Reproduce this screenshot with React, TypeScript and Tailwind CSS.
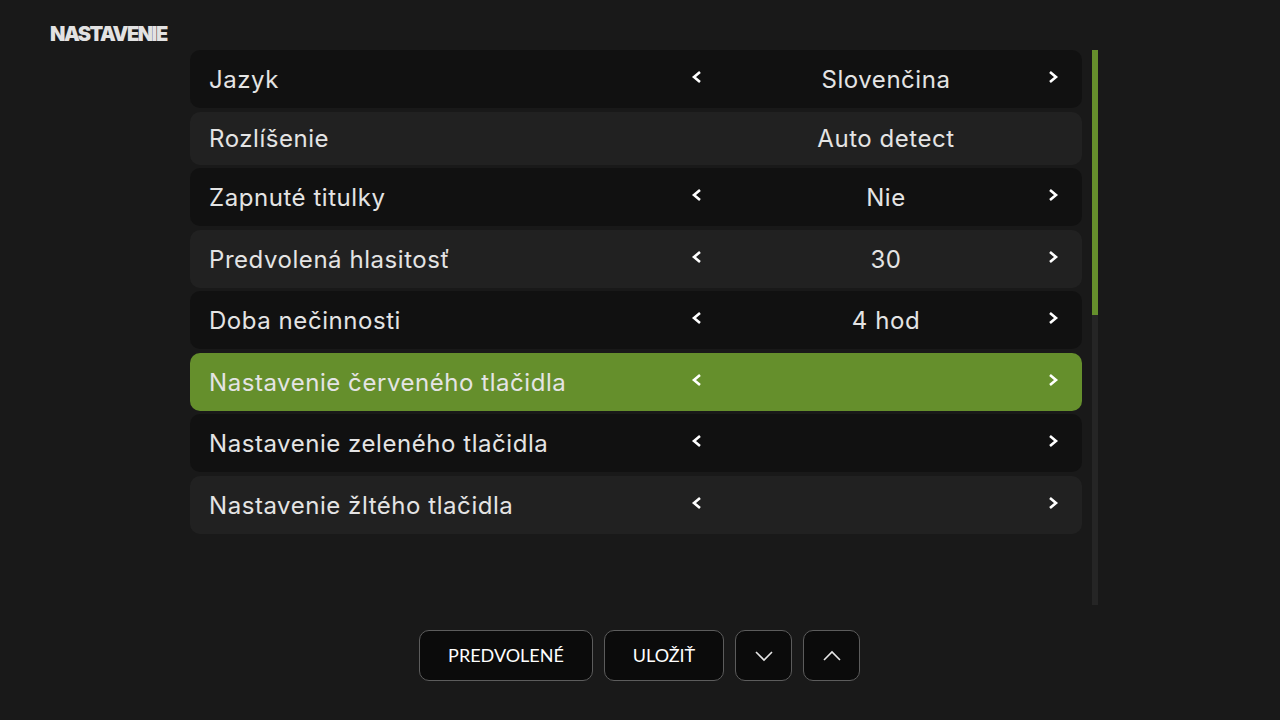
import React from "react";

type Row = { label: string; value: string; arrows: boolean };

const rows: Row[] = [
  { label: "Jazyk", value: "Slovenčina", arrows: true },
  { label: "Rozlíšenie", value: "Auto detect", arrows: false },
  { label: "Zapnuté titulky", value: "Nie", arrows: true },
  { label: "Predvolená hlasitosť", value: "30", arrows: true },
  { label: "Doba nečinnosti", value: "4 hod", arrows: true },
  { label: "Nastavenie červeného tlačidla", value: "", arrows: true },
  { label: "Nastavenie zeleného tlačidla", value: "", arrows: true },
  { label: "Nastavenie žltého tlačidla", value: "", arrows: true },
];

const Arrow = ({ dir }: { dir: "left" | "right" }) => (
  <svg width="12" height="14" viewBox="0 0 12 14" className="mb-[4px]">
    <polyline
      points={dir === "left" ? "9,2 3,7 9,12" : "3,2 9,7 3,12"}
      fill="none"
      stroke="#ffffff"
      strokeWidth="2.6"
      strokeLinejoin="miter"
    />
  </svg>
);

const Chevron = ({ up }: { up?: boolean }) => (
  <svg width="20" height="12" viewBox="0 0 20 12">
    <polyline
      points={up ? "2,10 10,2 18,10" : "2,2 10,10 18,2"}
      fill="none"
      stroke="#e6e6e6"
      strokeWidth="1.6"
    />
  </svg>
);

const SettingRow = ({ row, i }: { row: Row; i: number }) => {
  const active = i === 5;
  const bg = active ? "bg-[#658f2c]" : i % 2 === 0 ? "bg-[#111111]" : "bg-[#212121]";
  return (
    <div
      className={`flex items-center rounded-[10px] pl-[19px] pr-[22px] font-['Inter',sans-serif] ${bg} ${
        row.arrows ? "h-[58px]" : "h-[53px]"
      }`}
    >
      <div className="flex-1 pt-[2px] text-[24px] tracking-[0.55px] text-[#e4e4e4]">{row.label}</div>
      <div className="flex items-center w-[380px]">
        <div className="w-[34px] flex justify-center">{row.arrows && <Arrow dir="left" />}</div>
        <div className="w-[320px] ml-[12px] pt-[2px] text-center text-[24px] tracking-[0.55px] text-[#e4e4e4]">
          {row.value}
        </div>
        <div className="w-[14px] flex justify-center">{row.arrows && <Arrow dir="right" />}</div>
      </div>
    </div>
  );
};

const App = () => {
  return (
    <div
      className="w-[1280px] h-[720px] bg-[#191919] flex flex-col overflow-hidden"
      style={{ fontFamily: "Lato, 'Noto Sans', sans-serif" }}
    >
      <div className="h-[50px] pl-[50px] pt-[21px]">
        <div className="text-[20px] leading-[26px] font-black tracking-[-1.5px] text-[#e2e2e2] font-['Inter',sans-serif]">
          NASTAVENIE
        </div>
      </div>
      <div className="flex pl-[190px]">
        <div className="w-[892px] flex flex-col gap-[3.5px]">
          {rows.map((r, i) => (
            <SettingRow key={r.label} row={r} i={i} />
          ))}
        </div>
        <div className="ml-[10px] w-[6px] h-[555px] bg-[#252525] flex flex-col">
          <div className="h-[265px] bg-[#658f2c]" />
        </div>
      </div>
      <div className="mt-[25px] flex justify-center gap-[11px] pr-[1px]">
        <button className="h-[51px] w-[174px] rounded-[10px] border border-[#5c5c5c] bg-[#0b0b0b] text-[18px] text-white">
          PREDVOLENÉ
        </button>
        <button className="h-[51px] w-[120px] rounded-[10px] border border-[#5c5c5c] bg-[#0b0b0b] text-[18px] text-white">
          ULOŽIŤ
        </button>
        <button className="h-[51px] w-[57px] rounded-[10px] border border-[#5c5c5c] bg-[#0b0b0b] flex items-center justify-center">
          <Chevron />
        </button>
        <button className="h-[51px] w-[57px] rounded-[10px] border border-[#5c5c5c] bg-[#0b0b0b] flex items-center justify-center">
          <Chevron up />
        </button>
      </div>
    </div>
  );
};

export default App;
